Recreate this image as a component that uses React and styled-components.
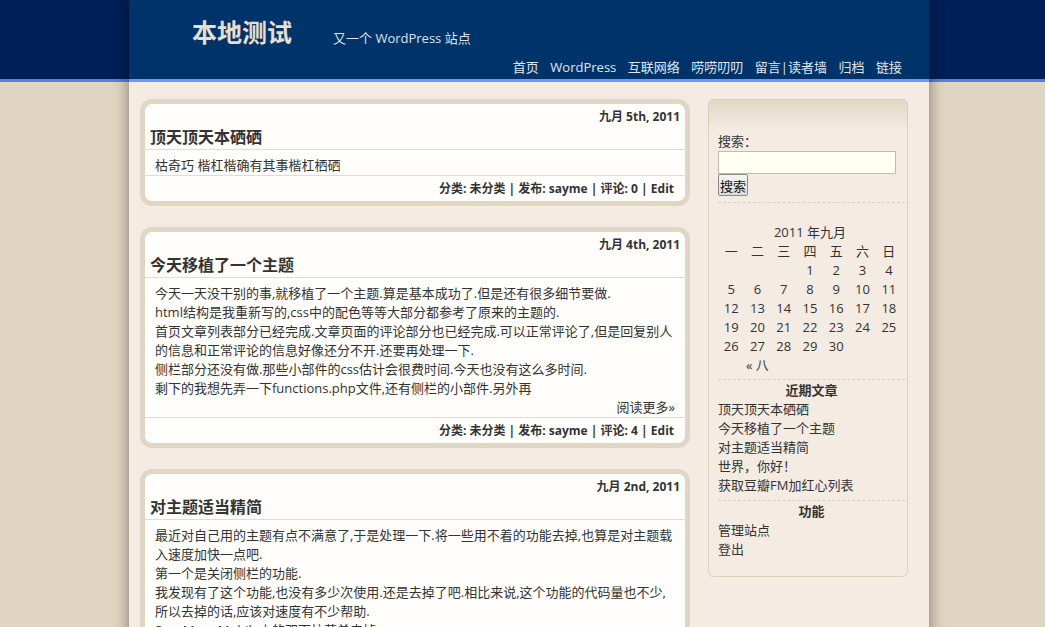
import React from 'react';
import styled, { createGlobalStyle } from 'styled-components';

const GlobalStyle = createGlobalStyle`
  * { box-sizing: border-box; }
  html, body { margin: 0; padding: 0; }
  body {
    background: linear-gradient(#001f57 0 79px, #5a7fd4 79px 82px) 0 0 / 100% 82px no-repeat, #e0d5c2;
    font-family: "Open Sans", "Noto Sans CJK SC", sans-serif;
    color: #333;
    font-size: 13px;
  }
  a { color: inherit; text-decoration: none; }
`;

const Page = styled.div`
  width: 800px;
  margin-left: calc(50% - 393.5px);
  box-shadow: 0 0 14px rgba(0, 0, 0, 0.45);
  background: #f4ece3;
  min-height: 700px;
`;

const Header = styled.header`
  height: 82px;
  background: #003369;
  border-bottom: 3px solid #6c9af0;
  padding: 17px 27px 0 63px;
  display: flex;
  flex-direction: column;
`;

const TitleRow = styled.div`
  display: flex;
  align-items: flex-end;
`;

const SiteTitle = styled.h1`
  margin: 0;
  font-size: 25px;
  line-height: 30px;
  font-weight: bold;
  color: #e7decd;
`;

const Tagline = styled.div`
  margin-left: 41px;
  font-size: 13px;
  line-height: 17px;
  color: #dfe4ee;
`;

const Nav = styled.nav`
  display: flex;
  justify-content: flex-end;
  gap: 11.5px;
  margin-top: 11px;
  font-size: 13px;
  line-height: 19px;
  a { color: #e2e6ef; }
`;

const Body = styled.div`
  display: flex;
  align-items: flex-start;
  gap: 18px;
  padding: 17px 21px 0 11px;
`;

const Main = styled.main`
  width: 550px;
  display: flex;
  flex-direction: column;
  gap: 21px;
`;

const Card = styled.article`
  border: 5px solid #e1d6c4;
  border-radius: 12px;
  background: #fffefb;
`;

const PostDate = styled.div`
  text-align: right;
  font-size: 12px;
  font-weight: bold;
  line-height: 16px;
  padding: 5px 5px 0;
`;

const PostTitle = styled.h2`
  margin: 0;
  padding: 0 5px;
  font-size: 16px;
  line-height: 24px;
  font-weight: bold;
  color: #333;
`;

const Entry = styled.div`
  border-top: 1px solid #e3dbcf;
  padding: 6px 10px 0;
  font-size: 13px;
  line-height: 19px;
`;

const Line = styled.div`
  white-space: nowrap;
`;

const ReadMore = styled.div`
  text-align: right;
`;

const PostMeta = styled.div`
  border-top: 1px solid #e3dbcf;
  padding: 4px 11px 3px;
  text-align: right;
  font-size: 12px;
  font-weight: bold;
  line-height: 18px;
`;

const Sidebar = styled.aside`
  width: 200px;
  border: 1px solid #dcd0bc;
  border-radius: 6px;
  background: linear-gradient(#e2d7c4, #f4ece3 30px);
  padding: 0 2px 12px 9px;
  line-height: 19px;
`;

const Widget = styled.section`
  padding-top: ${(p) => p.$top || 0}px;
  padding-bottom: ${(p) => p.$bottom || 5}px;
  border-bottom: 1px dashed #d8cebe;
  &:last-child { border-bottom: none; }
`;

const WidgetTitle = styled.h3`
  margin: 0;
  font-size: 13px;
  line-height: 19px;
  font-weight: bold;
  text-align: center;
`;

const Label = styled.label`
  display: block;
`;

const SearchInput = styled.input`
  display: block;
  width: 178px;
  height: 23px;
  margin: 0;
  border: 1px solid #c3bba9;
  background: #fffff2;
  padding: 2px 3px;
`;

const SearchButton = styled.button`
  display: block;
  height: 22px;
  width: 30px;
  margin: 0;
  padding: 0;
  font-family: "Noto Sans CJK SC", sans-serif;
  font-size: 13px;
  color: #111;
  border: 1px solid #8b8b8b;
  border-radius: 2px;
  background: linear-gradient(#f6f6f6, #dadada);
`;

const Calendar = styled.table`
  width: 184px;
  table-layout: fixed;
  border-collapse: collapse;
  caption { line-height: 19px; }
  th, td { padding: 0; text-align: center; font-weight: normal; line-height: 19px; }
`;

const LinkList = styled.ul`
  margin: 0;
  padding: 0;
  list-style: none;
`;

const posts = [
  {
    date: '九月 5th, 2011',
    title: '顶天顶天本硒硒',
    lines: ['枯奇巧 楷杠楷确有其事楷杠栖硒'],
    more: false,
    comments: 0,
  },
  {
    date: '九月 4th, 2011',
    title: '今天移植了一个主题',
    lines: [
      '今天一天没干别的事,就移植了一个主题.算是基本成功了.但是还有很多细节要做.',
      'html结构是我重新写的,css中的配色等等大部分都参考了原来的主题的.',
      '首页文章列表部分已经完成.文章页面的评论部分也已经完成.可以正常评论了,但是回复别人',
      '的信息和正常评论的信息好像还分不开.还要再处理一下.',
      '侧栏部分还没有做.那些小部件的css估计会很费时间.今天也没有这么多时间.',
      '剩下的我想先弄一下functions.php文件,还有侧栏的小部件.另外再',
    ],
    more: true,
    comments: 4,
  },
  {
    date: '九月 2nd, 2011',
    title: '对主题适当精简',
    lines: [
      '最近对自己用的主题有点不满意了,于是处理一下.将一些用不着的功能去掉,也算是对主题载',
      '入速度加快一点吧.',
      '第一个是关闭侧栏的功能.',
      '我发现有了这个功能,也没有多少次使用.还是去掉了吧.相比来说,这个功能的代码量也不少,',
      '所以去掉的话,应该对速度有不少帮助.',
      'SexyMenuMobile中的双下拉菜单去掉.',
      '其他的一些小功能也一并去掉了.',
    ],
    more: true,
    comments: 2,
  },
];

const navItems = ['首页', 'WordPress', '互联网络', '唠唠叨叨', '留言|读者墙', '归档', '链接'];

const weeks = [
  ['', '', '', '1', '2', '3', '4'],
  ['5', '6', '7', '8', '9', '10', '11'],
  ['12', '13', '14', '15', '16', '17', '18'],
  ['19', '20', '21', '22', '23', '24', '25'],
  ['26', '27', '28', '29', '30', '', ''],
];

const recent = ['顶天顶天本硒硒', '今天移植了一个主题', '对主题适当精简', '世界，你好！', '获取豆瓣FM加红心列表'];

export default function App() {
  return (
    <>
      <GlobalStyle />
      <Page>
        <Header>
          <TitleRow>
            <SiteTitle>本地测试</SiteTitle>
            <Tagline>又一个 WordPress 站点</Tagline>
          </TitleRow>
          <Nav>
            {navItems.map((n) => (
              <a key={n} href="#">{n}</a>
            ))}
          </Nav>
        </Header>
        <Body>
          <Main>
            {posts.map((p) => (
              <Card key={p.title}>
                <PostDate>{p.date}</PostDate>
                <PostTitle>{p.title}</PostTitle>
                <Entry>
                  {p.lines.map((l, i) => (
                    <Line key={i}>{l}</Line>
                  ))}
                  {p.more && <ReadMore>阅读更多»</ReadMore>}
                </Entry>
                <PostMeta>
                  分类: 未分类 | 发布: sayme | 评论: {p.comments} | Edit
                </PostMeta>
              </Card>
            ))}
          </Main>
          <Sidebar>
            <Widget $top={32} $bottom={6}>
              <Label htmlFor="s">搜索：</Label>
              <SearchInput id="s" type="text" />
              <SearchButton type="button">搜索</SearchButton>
            </Widget>
            <Widget $top={20} $bottom={4}>
              <Calendar>
                <caption>2011 年九月</caption>
                <thead>
                  <tr>
                    {['一', '二', '三', '四', '五', '六', '日'].map((d) => (
                      <th key={d}>{d}</th>
                    ))}
                  </tr>
                </thead>
                <tbody>
                  {weeks.map((w, i) => (
                    <tr key={i}>
                      {w.map((d, j) => (
                        <td key={j}>{d}</td>
                      ))}
                    </tr>
                  ))}
                </tbody>
                <tfoot>
                  <tr>
                    <td colSpan={3}>« 八</td>
                    <td></td>
                    <td colSpan={3}></td>
                  </tr>
                </tfoot>
              </Calendar>
            </Widget>
            <Widget $top={1} $bottom={5}>
              <WidgetTitle>近期文章</WidgetTitle>
              <LinkList>
                {recent.map((r) => (
                  <li key={r}><a href="#">{r}</a></li>
                ))}
              </LinkList>
            </Widget>
            <Widget $top={1}>
              <WidgetTitle>功能</WidgetTitle>
              <LinkList>
                <li><a href="#">管理站点</a></li>
                <li><a href="#">登出</a></li>
              </LinkList>
            </Widget>
          </Sidebar>
        </Body>
      </Page>
    </>
  );
}
